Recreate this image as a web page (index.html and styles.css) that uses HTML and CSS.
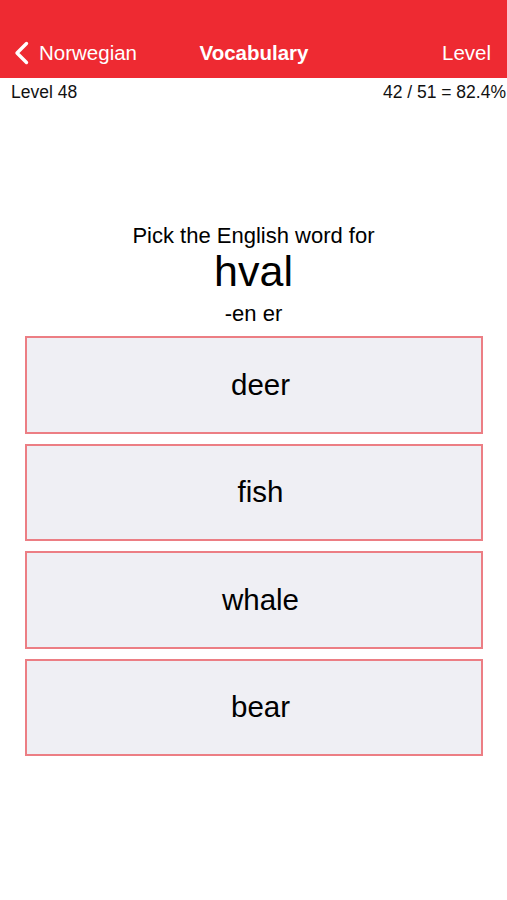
FILE: index.html
```html
<!DOCTYPE html>
<html>
<head>
<meta charset="utf-8">
<link rel="stylesheet" href="styles.css">
</head>
<body>
<header class="bar">
  <div class="nav">
    <div class="back">
      <svg class="chev" width="15" height="24" viewBox="0 0 15 24"><path d="M12.5 2.5 L3 12 L12.5 21.5" fill="none" stroke="#fff" stroke-width="3.4" stroke-linecap="round" stroke-linejoin="round"/></svg>
      <span>Norwegian</span>
    </div>
    <div class="title">Vocabulary</div>
    <div class="right">Level</div>
  </div>
</header>
<div class="stats">
  <span>Level 48</span>
  <span>42 / 51 = 82.4%</span>
</div>
<main class="quiz">
  <div class="prompt">Pick the English word for</div>
  <div class="word">hval</div>
  <div class="gender">-en er</div>
  <div class="choices">
    <div class="choice">deer</div>
    <div class="choice">fish</div>
    <div class="choice">whale</div>
    <div class="choice">bear</div>
  </div>
</main>
</body>
</html>
```
FILE: styles.css
```css
* { box-sizing: border-box; }
html, body { margin: 0; padding: 0; background: #fff; }
body { font-family: "Liberation Sans", Arial, sans-serif; color: #000; width: 507px; }
.bar { background: #ee2a32; height: 78px; padding-top: 27px; }
.nav { height: 52px; display: flex; align-items: center; justify-content: space-between; padding: 0 16px 0 14px; color: #fff; font-size: 20.5px; position: relative; }
.back { display: flex; align-items: center; gap: 10px; }
.chev { display: block; }
.title { position: absolute; left: 0; right: 0; text-align: center; font-weight: bold; pointer-events: none; padding-left: 1px; }
.stats { display: flex; justify-content: space-between; padding: 4px 1px 0 11px; font-size: 17.5px; line-height: 20px; height: 28px; color: #111; }
.quiz { display: flex; flex-direction: column; align-items: center; padding-top: 117px; }
.prompt { font-size: 22px; line-height: 26px; }
.word { font-size: 43px; line-height: 46px; margin-top: -1px; }
.gender { font-size: 22px; line-height: 26px; margin-top: 7px; }
.choices { display: flex; flex-direction: column; gap: 10px; width: 458px; margin-top: 9px; }
.choice { height: 97.5px; background: #efeff4; border: 2px solid #ec7e84; display: flex; align-items: center; justify-content: center; font-size: 29.5px; padding-left: 14px; }
```
